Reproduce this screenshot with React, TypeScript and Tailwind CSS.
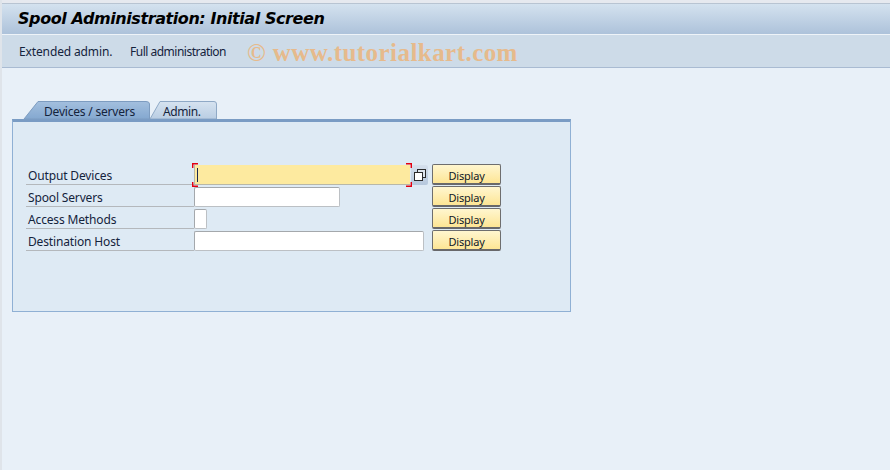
const rows = [
  { label: "Output Devices", width: "w-[216px]", focused: true },
  { label: "Spool Servers", width: "w-[146px]", focused: false },
  { label: "Access Methods", width: "w-[13px]", focused: false },
  { label: "Destination Host", width: "w-[230px]", focused: false },
];

function Corner({ className, d }: { className: string; d: string }) {
  return (
    <svg className={`absolute ${className}`} width="6" height="5" viewBox="0 0 6 5">
      <path d={d} fill="none" stroke="#e3000f" strokeWidth="1.4" />
    </svg>
  );
}

function ValueHelp() {
  return (
    <div className="w-[17px] h-[20px] flex items-center justify-center rounded-[2px] bg-gradient-to-b from-[#d5e0ec] to-[#b5c7dc]">
      <svg width="14" height="14" viewBox="0 0 14 14">
        <rect x="4.5" y="1.5" width="8" height="8" fill="#dfe6ee" stroke="#2b2b2b" />
        <rect x="1.5" y="4.5" width="8" height="8" fill="#ffffff" stroke="#2b2b2b" />
      </svg>
    </div>
  );
}

function FieldRow({ label, width, focused }: { label: string; width: string; focused: boolean }) {
  return (
    <div className="h-[22px] flex items-start">
      <div className="w-[168px] h-[21px] border-b border-[#b4b8bc] pl-[2px] leading-[23px] tracking-[-0.15px]">{label}</div>
      <div className="w-[238px] flex items-start">
        {focused ? (
          <>
            <div className="relative w-[216px] h-[20px] mt-[1px] bg-[#fdea9f] border-l border-b border-[#b8b8a8] flex items-center pl-[2px]">
              <span className="w-[1px] h-[14px] bg-[#1a2a50]" />
              <Corner className="-left-[3px] -top-[2px]" d="M6 .7H.7V5" />
              <Corner className="-left-[3px] -bottom-[3px]" d="M6 4.3H.7V0" />
              <Corner className="-right-[2px] -top-[2px]" d="M0 .7H5.3V5" />
              <Corner className="-right-[2px] -bottom-[3px]" d="M0 4.3H5.3V0" />
            </div>
            <div className="ml-[1px] mt-[1px]">
              <ValueHelp />
            </div>
          </>
        ) : (
          <div className={`${width} h-[20px] mt-[1px] bg-white rounded-[2px] border border-[#bcc0c4] border-l-[#a4a8ac] border-t-[#a4a8ac]`} />
        )}
      </div>
      <button className="w-[69px] h-[21px] pt-[3px] rounded-[2px] border border-[#6e6e6e] border-b-2 border-b-[#68686a] bg-gradient-to-b from-[#fff6cf] to-[#fde594] text-[11px] tracking-[-0.2px] text-[#101828]">
        Display
      </button>
    </div>
  );
}

export default function App() {
  return (
    <div className="w-[890px] h-[470px] overflow-hidden flex flex-col bg-[#e8f0f8] border-l-2 border-[#dfe4ea] text-[12px] text-[#14233c] font-['Noto_Sans',sans-serif]">
      <div className="h-[4px] bg-[#e6e9ef] border-b border-[#b8c4d2]" />
      <div className="h-[31px] shrink-0 bg-gradient-to-b from-[#d4e2ef] to-[#adc2da] pl-[16px] flex items-center border-b border-[#eef3f8]">
        <h1 className="text-[16px] font-['DejaVu_Sans',sans-serif] font-bold italic text-black tracking-[-0.42px]">Spool Administration: Initial Screen</h1>
      </div>
      <div className="h-[33px] shrink-0 bg-[#cddbe8] border-b border-[#a9bbd2] pl-[17px] flex items-center">
        <span className="w-[111px] pt-[1px] tracking-[-0.13px]">Extended admin.</span>
        <span className="w-[117px] pt-[1px] tracking-[-0.5px]">Full administration</span>
        <span className="pt-[3px] font-['Liberation_Serif',serif] font-bold text-[25px] tracking-[0.45px] text-[#e6ba8c]">
          © www.tutorialkart.com
        </span>
      </div>

      <div className="ml-[10px] mt-[31px] w-[559px]">
        <div className="relative h-[20px] flex items-start">
          <svg className="absolute left-0 top-0" width="206" height="20" viewBox="0 0 206 20">
            <defs>
              <linearGradient id="tabActive" x1="0" y1="0" x2="0" y2="1">
                <stop offset="0" stopColor="#a3bfde" />
                <stop offset="1" stopColor="#84a8d0" />
              </linearGradient>
              <linearGradient id="tabIdle" x1="0" y1="0" x2="0" y2="1">
                <stop offset="0" stopColor="#d6e3f0" />
                <stop offset="1" stopColor="#b9cde3" />
              </linearGradient>
            </defs>
            <path d="M138 20 L148 2.5 L202 2.5 Q204.5 2.5 204.5 5 L204.5 20 Z" fill="url(#tabIdle)" stroke="#8fa9c6" />
            <path d="M12 20 L26 2.5 L134 2.5 Q137.5 2.5 137.5 5 L137.5 20 Z" fill="url(#tabActive)" stroke="#7d9cc0" />
          </svg>
          <span className="relative ml-[32px] w-[107px] leading-[25px] tracking-[-0.2px]">Devices / servers</span>
          <span className="relative ml-[12px] leading-[25px] tracking-[-0.4px]">Admin.</span>
        </div>
        <div className="h-[193px] bg-[#deeaf4] border border-[#8fb0d4] border-t-[3px] border-t-[#7a9cc4] pt-[42px] pl-[13px]">
          {rows.map((row) => (
            <FieldRow key={row.label} {...row} />
          ))}
        </div>
      </div>
    </div>
  );
}
